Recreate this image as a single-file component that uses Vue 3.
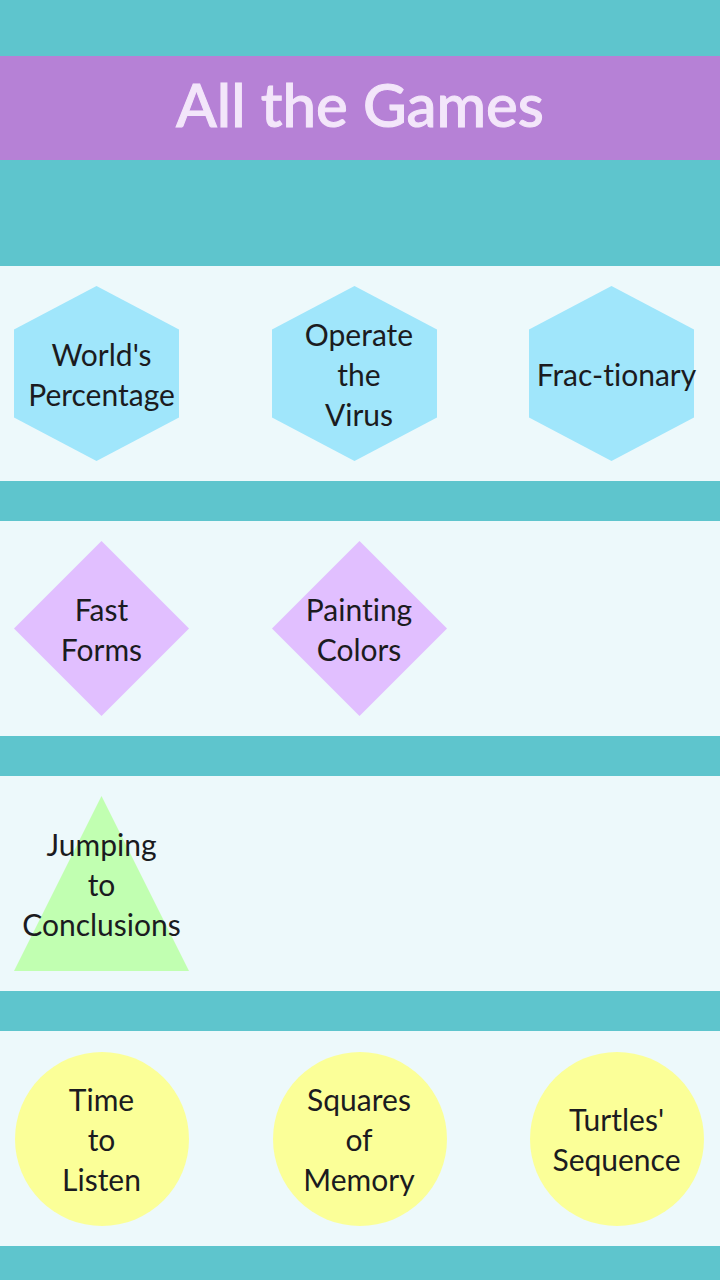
<script setup>
const rows = [
  { shape: 'hexagon', games: [["World's", 'Percentage'], ['Operate', 'the', 'Virus'], ['Frac-tionary']] },
  { shape: 'diamond', games: [['Fast', 'Forms'], ['Painting', 'Colors']] },
  { shape: 'triangle', games: [['Jumping', 'to', 'Conclusions']] },
  { shape: 'circle', games: [['Time', 'to', 'Listen'], ['Squares', 'of', 'Memory'], ["Turtles'", 'Sequence']] }
]
const points = {
  hexagon: '82.5,0 165,43.5 165,131.5 82.5,175 0,131.5 0,43.5',
  diamond: '87.5,0 175,87.5 87.5,175 0,87.5',
  triangle: '87.5,0 175,175 0,175'
}
</script>

<template>
  <main class="page">
    <header class="banner"><h1>All the Games</h1></header>
    <nav class="rows" aria-label="Games">
      <section v-for="row in rows" :key="row.shape" class="row" :class="row.shape">
        <button v-for="game in row.games" :key="game[0]" type="button" class="game">
          <svg class="shape" viewBox="0 0 175 175" aria-hidden="true">
            <circle v-if="row.shape === 'circle'" cx="88" cy="88" r="87" />
            <polygon v-else :points="points[row.shape]" />
          </svg>
          <span class="label"><span v-for="line in game" :key="line" class="line">{{ line }}</span></span>
        </button>
      </section>
    </nav>
  </main>
</template>

<style>
body {
  background: #5ec5cd;
}
</style>

<style scoped>
.page {
  box-sizing: border-box;
  min-height: 100vh;
  padding: 56px 0 34px;
  background: #5ec5cd;
  font-family: Lato, "Open Sans", sans-serif;
  font-variant-ligatures: none;
}
.banner {
  box-sizing: border-box;
  display: flex;
  align-items: center;
  justify-content: center;
  height: 104px;
  margin-bottom: 106px;
  padding-bottom: 8px;
  background: #b681d6;
}
h1 {
  margin: 0;
  color: #f3e6fa;
  font-size: 60px;
  font-weight: 500;
  line-height: 72px;
  -webkit-text-stroke: 1px #f3e6fa;
}
.rows {
  display: grid;
  gap: 40px;
}
.row {
  display: grid;
  grid-template-columns: repeat(3, 175px);
  justify-content: space-between;
  padding: 20px 16px 20px 14px;
  background: #edf9fb;
}
.game {
  display: grid;
  place-items: center;
  width: 175px;
  height: 175px;
  padding: 0;
  border: 0;
  background: none;
  color: #1b1b20;
  font: inherit;
  font-size: 30px;
  line-height: 40px;
  cursor: pointer;
}
.shape,
.label {
  grid-area: 1 / 1;
}
.shape {
  width: 175px;
  height: 175px;
}
.label {
  display: grid;
  justify-items: center;
  white-space: nowrap;
}
.line {
  display: block;
}
.hexagon .shape { fill: #a0e6fb; }
.diamond .shape { fill: #e1bfff; }
.triangle .shape { fill: #c1ffb1; }
.circle .shape { fill: #fbff98; }
</style>
